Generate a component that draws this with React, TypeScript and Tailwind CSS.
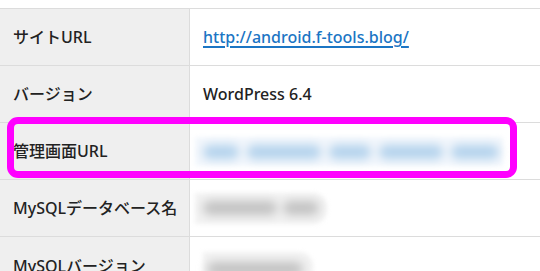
import React from "react";

const font = { fontFamily: '"Noto Sans", "Noto Sans CJK JP", sans-serif' };

function Row({ label, children, last }: { label: string; children?: React.ReactNode; last?: boolean }) {
  return (
    <div className={`flex h-[57px] shrink-0 ${last ? "" : "border-b border-[#dcdcdc]"}`}>
      <div className="w-[190px] shrink-0 bg-[#efefef] border-r border-[#dcdcdc] flex items-center pl-[13px] text-[16px] font-medium text-[#222]">
        {label}
      </div>
      <div className="flex-1 flex items-center pl-[13px] text-[16px] font-medium text-[#222]">{children}</div>
    </div>
  );
}

function Blob({ w, color }: { w: number; color: string }) {
  return <div className={`h-[14px] shrink-0 rounded-full blur-[4px] ${color}`} style={{ width: w }} />;
}

export default function App() {
  return (
    <div className="w-[540px] h-[271px] overflow-hidden bg-white relative" style={font}>
      <div className="pt-[8px]">
        <div className="border-t border-[#dcdcdc] flex flex-col">
          <Row label="サイトURL">
            <a href="#" className="text-[#1b75c4] underline underline-offset-[3px] decoration-[1.5px]">
              http://android.f-tools.blog/
            </a>
          </Row>
          <Row label="バージョン">WordPress 6.4</Row>
          <Row label="管理画面URL">
            <div className="-ml-[8px] h-[29px] w-[308px] mt-[1px] bg-[#f3f7fc] blur-[2px] flex items-center pl-[8px] gap-[8px]">
              <Blob w={36} color="bg-[#b3d2ec]" />
              <Blob w={74} color="bg-[#b3d2ec]" />
              <Blob w={42} color="bg-[#b3d2ec]" />
              <Blob w={64} color="bg-[#b3d2ec]" />
              <Blob w={48} color="bg-[#b3d2ec]" />
            </div>
          </Row>
          <Row label="MySQLデータベース名">
            <div className="-ml-[8px] h-[31px] w-[132px] bg-[#f2f2f2] blur-[2px] rounded-r-[14px] flex items-center pl-[8px] gap-[6px]">
              <Blob w={74} color="bg-[#c2c2c2]" />
              <Blob w={36} color="bg-[#c2c2c2]" />
            </div>
          </Row>
          <Row label="MySQLバージョン" last>
            <div className="mt-[7px] h-[34px] w-[110px] bg-[#f2f2f2] blur-[2px] rounded-r-[14px] flex items-center pl-[4px]">
              <Blob w={96} color="bg-[#c2c2c2]" />
            </div>
          </Row>
        </div>
      </div>
      <div className="absolute left-[7px] top-[117px] w-[510px] h-[61px] border-[7px] border-[#ff00ff] rounded-[11px]" />
    </div>
  );
}
